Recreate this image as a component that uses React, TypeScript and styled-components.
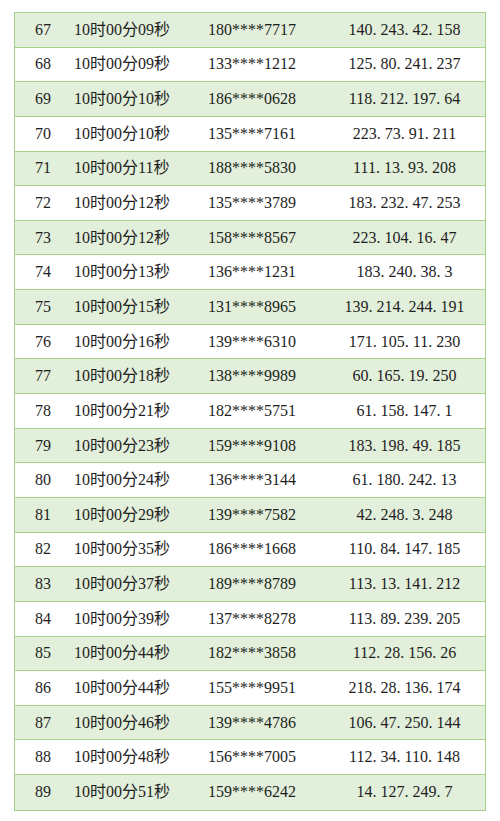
import styled, { createGlobalStyle } from "styled-components";

interface Visit {
  no: number;
  time: string;
  phone: string;
  ip: string;
}

const visits: Visit[] = [
  { no: 67, time: "10时00分09秒", phone: "180****7717", ip: "140.243.42.158" },
  { no: 68, time: "10时00分09秒", phone: "133****1212", ip: "125.80.241.237" },
  { no: 69, time: "10时00分10秒", phone: "186****0628", ip: "118.212.197.64" },
  { no: 70, time: "10时00分10秒", phone: "135****7161", ip: "223.73.91.211" },
  { no: 71, time: "10时00分11秒", phone: "188****5830", ip: "111.13.93.208" },
  { no: 72, time: "10时00分12秒", phone: "135****3789", ip: "183.232.47.253" },
  { no: 73, time: "10时00分12秒", phone: "158****8567", ip: "223.104.16.47" },
  { no: 74, time: "10时00分13秒", phone: "136****1231", ip: "183.240.38.3" },
  { no: 75, time: "10时00分15秒", phone: "131****8965", ip: "139.214.244.191" },
  { no: 76, time: "10时00分16秒", phone: "139****6310", ip: "171.105.11.230" },
  { no: 77, time: "10时00分18秒", phone: "138****9989", ip: "60.165.19.250" },
  { no: 78, time: "10时00分21秒", phone: "182****5751", ip: "61.158.147.1" },
  { no: 79, time: "10时00分23秒", phone: "159****9108", ip: "183.198.49.185" },
  { no: 80, time: "10时00分24秒", phone: "136****3144", ip: "61.180.242.13" },
  { no: 81, time: "10时00分29秒", phone: "139****7582", ip: "42.248.3.248" },
  { no: 82, time: "10时00分35秒", phone: "186****1668", ip: "110.84.147.185" },
  { no: 83, time: "10时00分37秒", phone: "189****8789", ip: "113.13.141.212" },
  { no: 84, time: "10时00分39秒", phone: "137****8278", ip: "113.89.239.205" },
  { no: 85, time: "10时00分44秒", phone: "182****3858", ip: "112.28.156.26" },
  { no: 86, time: "10时00分44秒", phone: "155****9951", ip: "218.28.136.174" },
  { no: 87, time: "10时00分46秒", phone: "139****4786", ip: "106.47.250.144" },
  { no: 88, time: "10时00分48秒", phone: "156****7005", ip: "112.34.110.148" },
  { no: 89, time: "10时00分51秒", phone: "159****6242", ip: "14.127.249.7" },
];

// 原图里 IP 的点是半角等宽的，这里用定宽 span 模拟
function IpText({ ip }: { ip: string }) {
  const parts = ip.split(".");
  return (
    <>
      {parts.map((p, i) => (
        <span key={i}>
          {p}
          {i < parts.length - 1 && <Dot>.</Dot>}
        </span>
      ))}
    </>
  );
}

export default function App() {
  return (
    <>
      <GlobalStyle />
      <Table>
        {visits.map((v, i) => (
          <Row key={v.no} $shaded={i % 2 === 0} $last={i === visits.length - 1}>
            <Cell>{v.no}</Cell>
            <Cell>{v.time}</Cell>
            <Cell>{v.phone}</Cell>
            <IpCell>
              <IpText ip={v.ip} />
            </IpCell>
          </Row>
        ))}
      </Table>
    </>
  );
}

const GlobalStyle = createGlobalStyle`
  html, body {
    margin: 0;
    padding: 0;
    background: #ffffff;
  }
`;

const Table = styled.div`
  box-sizing: border-box;
  width: 472px;
  margin: 12px 0 0 14px;
  border: 1px solid #a9d18e;
`;

const Row = styled.div<{ $shaded: boolean; $last: boolean }>`
  box-sizing: border-box;
  display: grid;
  grid-template-columns: 39px 134px 136px 1fr;
  align-items: center;
  height: 34.65px;
  border-bottom: ${({ $last }) => ($last ? "0" : "1px solid #a9d18e")};
  background: ${({ $shaded }) => ($shaded ? "#e2efda" : "#ffffff")};
  color: #1e1e1e;
  font-family: "Liberation Serif", "DejaVu Serif", "Noto Sans CJK SC", serif;
  font-size: 16px;
`;

const Cell = styled.div`
  padding-left: 20px;
  white-space: nowrap;
  line-height: 1;
`;

const IpCell = styled.div`
  text-align: center;
  white-space: nowrap;
  line-height: 1;
`;

const Dot = styled.span`
  display: inline-block;
  width: 0.5em;
  text-align: left;
`;
